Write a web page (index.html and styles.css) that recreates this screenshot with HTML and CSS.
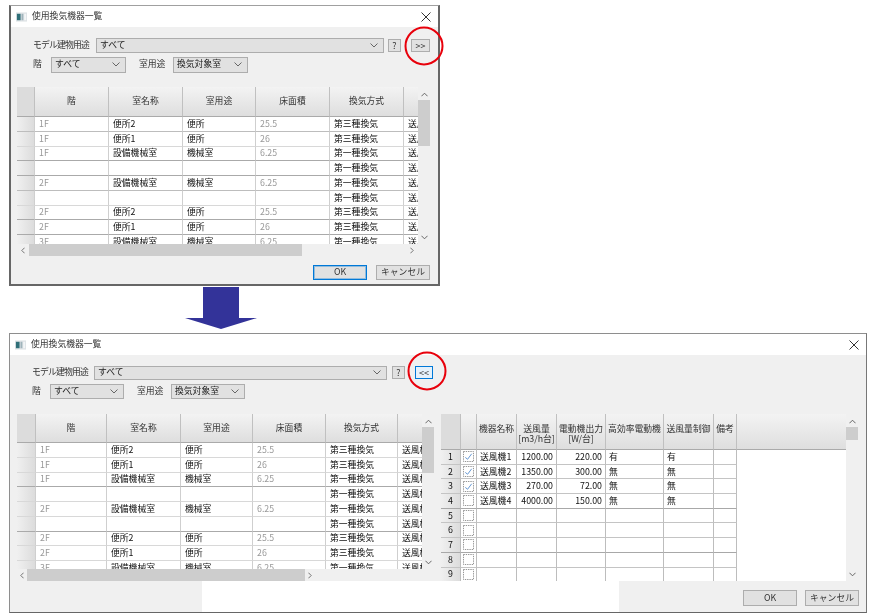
FILE: index.html
```html
<!DOCTYPE html>
<html lang="ja">
<head>
<meta charset="utf-8">
<title>使用換気機器一覧</title>
<link rel="stylesheet" href="styles.css">
</head>
<body>
<section class="win win-small">
  <header class="titlebar">
    <svg class="appicon" viewBox="0 0 12 10"><rect width="12" height="10" fill="#dfe3e6"/><rect x="1" y="1.5" width="4" height="7" fill="#2f6f78"/><rect x="6" y="1.5" width="2" height="7" fill="#9fb4bb"/><rect x="9" y="1.5" width="2" height="7" fill="#f4f6f7"/></svg>
    <span class="title">使用換気機器一覧</span>
    <svg class="close" viewBox="0 0 10 10"><path d="M.5.5l9 9M9.5.5l-9 9" stroke="#333" fill="none"/></svg>
  </header>
  <div class="body">
    <div class="filters">
      <div class="frow frow-a">
        <label class="lbl lbl-model">モデル建物用途</label>
        <div class="combo combo-wide"><span>すべて</span><svg class="chev" viewBox="0 0 8 5"><path d="M.5.5L4 4 7.5.5" stroke="#666" fill="none"/></svg></div>
        <button class="btn btn-q">?</button>
        <button class="btn btn-toggle">&gt;&gt;</button>
      </div>
      <div class="frow frow-b">
        <label class="lbl lbl-floor">階</label>
        <div class="combo combo-s"><span>すべて</span><svg class="chev" viewBox="0 0 8 5"><path d="M.5.5L4 4 7.5.5" stroke="#666" fill="none"/></svg></div>
        <label class="lbl lbl-use">室用途</label>
        <div class="combo combo-s"><span>換気対象室</span><svg class="chev" viewBox="0 0 8 5"><path d="M.5.5L4 4 7.5.5" stroke="#666" fill="none"/></svg></div>
      </div>
    </div>
    <div class="gridbox">
      <div class="viewport">
        <div class="row head"><div class="rh"></div><div>階</div><div>室名称</div><div>室用途</div><div>床面積</div><div>換気方式</div><div></div></div>
        <div class="row"><div class="rh"></div><div class="dim">1F</div><div>便所2</div><div>便所</div><div class="dim">25.5</div><div>第三種換気</div><div>送風機</div></div>
        <div class="row lt"><div class="rh"></div><div class="dim">1F</div><div>便所1</div><div>便所</div><div class="dim">26</div><div>第三種換気</div><div>送風機</div></div>
        <div class="row dk"><div class="rh"></div><div class="dim">1F</div><div>設備機械室</div><div>機械室</div><div class="dim">6.25</div><div>第一種換気</div><div>送風機</div></div>
        <div class="row dk"><div class="rh"></div><div></div><div></div><div></div><div></div><div>第一種換気</div><div>送風機</div></div>
        <div class="row"><div class="rh"></div><div class="dim">2F</div><div>設備機械室</div><div>機械室</div><div class="dim">6.25</div><div>第一種換気</div><div>送風機</div></div>
        <div class="row lt"><div class="rh"></div><div></div><div></div><div></div><div></div><div>第一種換気</div><div>送風機</div></div>
        <div class="row dk"><div class="rh"></div><div class="dim">2F</div><div>便所2</div><div>便所</div><div class="dim">25.5</div><div>第三種換気</div><div>送風機</div></div>
        <div class="row dk"><div class="rh"></div><div class="dim">2F</div><div>便所1</div><div>便所</div><div class="dim">26</div><div>第三種換気</div><div>送風機</div></div>
        <div class="row"><div class="rh"></div><div class="dim">3F</div><div>設備機械室</div><div>機械室</div><div class="dim">6.25</div><div>第一種換気</div><div>送風機</div></div>
      </div>
      <div class="vbar"><svg class="arr" viewBox="0 0 8 5"><path d="M.5 4.5L4 1l3.500 3.500" stroke="#555" fill="none"/></svg><i class="vthumb"></i><svg class="arr arr-end" viewBox="0 0 8 5"><path d="M.5.5L4 4 7.500.5" stroke="#555" fill="none"/></svg></div>
      <div class="hbar"><svg class="arrh" viewBox="0 0 5 8"><path d="M4.500.5L1 4l3.500 3.500" stroke="#555" fill="none"/></svg><i class="hthumb"></i><svg class="arrh arrh-end" viewBox="0 0 5 8"><path d="M.5.5L4 4 .5 7.500" stroke="#555" fill="none"/></svg></div>
    </div>
    <div class="actions">
      <button class="btn btn-act btn-def">OK</button>
      <button class="btn btn-act">キャンセル</button>
    </div>
  </div>
  <svg class="ring" viewBox="0 0 40 40"><circle cx="20" cy="20" r="18.500" stroke="#e8000b" stroke-width="2" fill="none"/></svg>
</section>

<svg class="bigarrow" viewBox="0 0 72 42"><path d="M18 0h36v31h18L36 42 0 31h18z" fill="#333399"/></svg>

<section class="win win-large">
  <header class="titlebar">
    <svg class="appicon" viewBox="0 0 12 10"><rect width="12" height="10" fill="#dfe3e6"/><rect x="1" y="1.5" width="4" height="7" fill="#2f6f78"/><rect x="6" y="1.5" width="2" height="7" fill="#9fb4bb"/><rect x="9" y="1.5" width="2" height="7" fill="#f4f6f7"/></svg>
    <span class="title">使用換気機器一覧</span>
    <svg class="close" viewBox="0 0 10 10"><path d="M.5.5l9 9M9.5.5l-9 9" stroke="#333" fill="none"/></svg>
  </header>
  <div class="body">
    <div class="filters">
      <div class="frow frow-a">
        <label class="lbl lbl-model">モデル建物用途</label>
        <div class="combo combo-wide"><span>すべて</span><svg class="chev" viewBox="0 0 8 5"><path d="M.5.5L4 4 7.500.5" stroke="#666" fill="none"/></svg></div>
        <button class="btn btn-q">?</button>
        <button class="btn btn-toggle btn-focus">&lt;&lt;</button>
      </div>
      <div class="frow frow-b">
        <label class="lbl lbl-floor">階</label>
        <div class="combo combo-s"><span>すべて</span><svg class="chev" viewBox="0 0 8 5"><path d="M.5.5L4 4 7.500.5" stroke="#666" fill="none"/></svg></div>
        <label class="lbl lbl-use">室用途</label>
        <div class="combo combo-s"><span>換気対象室</span><svg class="chev" viewBox="0 0 8 5"><path d="M.5.5L4 4 7.500.5" stroke="#666" fill="none"/></svg></div>
      </div>
    </div>
    <div class="panes">
      <div class="gridbox">
        <div class="viewport">
          <div class="row head"><div class="rh"></div><div>階</div><div>室名称</div><div>室用途</div><div>床面積</div><div>換気方式</div><div></div></div>
          <div class="row lt"><div class="rh"></div><div class="dim">1F</div><div>便所2</div><div>便所</div><div class="dim">25.5</div><div>第三種換気</div><div>送風機</div></div>
          <div class="row lt"><div class="rh"></div><div class="dim">1F</div><div>便所1</div><div>便所</div><div class="dim">26</div><div>第三種換気</div><div>送風機</div></div>
          <div class="row dk"><div class="rh"></div><div class="dim">1F</div><div>設備機械室</div><div>機械室</div><div class="dim">6.25</div><div>第一種換気</div><div>送風機</div></div>
          <div class="row lt"><div class="rh"></div><div></div><div></div><div></div><div></div><div>第一種換気</div><div>送風機</div></div>
          <div class="row lt"><div class="rh"></div><div class="dim">2F</div><div>設備機械室</div><div>機械室</div><div class="dim">6.25</div><div>第一種換気</div><div>送風機</div></div>
          <div class="row dk"><div class="rh"></div><div></div><div></div><div></div><div></div><div>第一種換気</div><div>送風機</div></div>
          <div class="row lt"><div class="rh"></div><div class="dim">2F</div><div>便所2</div><div>便所</div><div class="dim">25.5</div><div>第三種換気</div><div>送風機</div></div>
          <div class="row lt"><div class="rh"></div><div class="dim">2F</div><div>便所1</div><div>便所</div><div class="dim">26</div><div>第三種換気</div><div>送風機</div></div>
          <div class="row"><div class="rh"></div><div class="dim">3F</div><div>設備機械室</div><div>機械室</div><div class="dim">6.25</div><div>第一種換気</div><div>送風機</div></div>
        </div>
        <div class="vbar"><svg class="arr" viewBox="0 0 8 5"><path d="M.5 4.500L4 1l3.500 3.500" stroke="#555" fill="none"/></svg><i class="vthumb"></i><svg class="arr arr-end" viewBox="0 0 8 5"><path d="M.5.5L4 4 7.500.5" stroke="#555" fill="none"/></svg></div>
        <div class="hbar"><svg class="arrh" viewBox="0 0 5 8"><path d="M4.500.5L1 4l3.500 3.500" stroke="#555" fill="none"/></svg><i class="hthumb"></i><svg class="arrh arrh-end" viewBox="0 0 5 8"><path d="M.5.5L4 4 .5 7.500" stroke="#555" fill="none"/></svg></div>
      </div>
      <div class="devbox">
        <div class="devview">
          <div class="drow dhead"><div class="rh"></div><div></div><div>機器名称</div><div>送風量<br>[m3/h台]</div><div>電動機出力<br>[W/台]</div><div>高効率電動機</div><div>送風量制御</div><div>備考</div><div></div></div>
          <div class="drow"><div class="rh num">1</div><div class="chk"><svg viewBox="0 0 12 12"><rect x=".5" y=".5" width="11" height="11" fill="#fff" stroke="#888" stroke-dasharray="1.500 1"/><path d="M2.500 7l2.500 2 4.500-6" stroke="#5a8fd0" fill="none"/></svg></div><div>送風機1</div><div class="r">1200.00</div><div class="r">220.00</div><div>有</div><div>有</div><div></div></div>
          <div class="drow"><div class="rh num">2</div><div class="chk"><svg viewBox="0 0 12 12"><rect x=".5" y=".5" width="11" height="11" fill="#fff" stroke="#888" stroke-dasharray="1.500 1"/><path d="M2.500 7l2.500 2 4.500-6" stroke="#5a8fd0" fill="none"/></svg></div><div>送風機2</div><div class="r">1350.00</div><div class="r">300.00</div><div>無</div><div>無</div><div></div></div>
          <div class="drow"><div class="rh num">3</div><div class="chk"><svg viewBox="0 0 12 12"><rect x=".5" y=".5" width="11" height="11" fill="#fff" stroke="#888" stroke-dasharray="1.500 1"/><path d="M2.500 7l2.500 2 4.500-6" stroke="#5a8fd0" fill="none"/></svg></div><div>送風機3</div><div class="r">270.00</div><div class="r">72.00</div><div>無</div><div>無</div><div></div></div>
          <div class="drow dk"><div class="rh num">4</div><div class="chk"><svg viewBox="0 0 12 12"><rect x=".5" y=".5" width="11" height="11" fill="#fff" stroke="#888" stroke-dasharray="1.500 1"/></svg></div><div>送風機4</div><div class="r">4000.00</div><div class="r">150.00</div><div>無</div><div>無</div><div></div></div>
          <div class="drow"><div class="rh num">5</div><div class="chk"><svg viewBox="0 0 12 12"><rect x=".5" y=".5" width="11" height="11" fill="#fff" stroke="#888" stroke-dasharray="1.500 1"/></svg></div><div></div><div></div><div></div><div></div><div></div><div></div></div>
          <div class="drow"><div class="rh num">6</div><div class="chk"><svg viewBox="0 0 12 12"><rect x=".5" y=".5" width="11" height="11" fill="#fff" stroke="#888" stroke-dasharray="1.500 1"/></svg></div><div></div><div></div><div></div><div></div><div></div><div></div></div>
          <div class="drow dk"><div class="rh num">7</div><div class="chk"><svg viewBox="0 0 12 12"><rect x=".5" y=".5" width="11" height="11" fill="#fff" stroke="#888" stroke-dasharray="1.500 1"/></svg></div><div></div><div></div><div></div><div></div><div></div><div></div></div>
          <div class="drow"><div class="rh num">8</div><div class="chk"><svg viewBox="0 0 12 12"><rect x=".5" y=".5" width="11" height="11" fill="#fff" stroke="#888" stroke-dasharray="1.500 1"/></svg></div><div></div><div></div><div></div><div></div><div></div><div></div></div>
          <div class="drow"><div class="rh num">9</div><div class="chk"><svg viewBox="0 0 12 12"><rect x=".5" y=".5" width="11" height="11" fill="#fff" stroke="#888" stroke-dasharray="1.500 1"/></svg></div><div></div><div></div><div></div><div></div><div></div><div></div></div>
        </div>
        <div class="vbar"><svg class="arr" viewBox="0 0 8 5"><path d="M.5 4.500L4 1l3.500 3.500" stroke="#555" fill="none"/></svg><i class="vthumb"></i><svg class="arr arr-end" viewBox="0 0 8 5"><path d="M.5.5L4 4 7.500.5" stroke="#555" fill="none"/></svg></div>
      </div>
    </div>
    <div class="foot">
      <div class="foot-gap"></div>
      <div class="actions">
        <button class="btn btn-act">OK</button>
        <button class="btn btn-act">キャンセル</button>
      </div>
    </div>
  </div>
  <svg class="ring" viewBox="0 0 40 40"><circle cx="20" cy="20" r="18.500" stroke="#e8000b" stroke-width="2" fill="none"/></svg>
</section>
</body>
</html>
```

FILE: styles.css
```css
* { box-sizing: border-box; }
html, body { margin: 0; height: 100%; }
body {
  background: #fff;
  padding: 5px 0 0 9px;
  font: 9px/1 "Noto Sans CJK JP", "Noto Sans", sans-serif;
  color: #111;
  overflow: hidden;
}

/* windows */
.win {
  position: relative;
  display: flex;
  flex-direction: column;
  background: #f0f0f0;
  border-style: solid;
  border-color: #666;
  border-width: 1px 2px 2px 2px;
  filter: blur(.3px);
}
.win-small { width: 431px; height: 281px; border-color: #a0a0a0 #666 #666 #666; }
.win-large { width: 858px; height: 280px; margin-top: 4px; border: 1px solid #8e8e8e; border-bottom-color: #666; border-right-color: #777; }

.titlebar {
  display: flex;
  align-items: center;
  flex: none;
  height: 21px;
  padding: 0 7px 0 5px;
  background: #fff;
}
.appicon { width: 11px; height: 10px; flex: none; }
.title { margin-left: 5px; font-size: 8.800px; color: #333; }
.close { width: 10px; height: 10px; margin-left: auto; }

.body { flex: 1; display: flex; flex-direction: column; min-height: 0; }

/* filter rows */
.filters { display: flex; flex-direction: column; padding: 10px 0 0 22px; }
.frow { display: flex; align-items: center; }
.frow-a { height: 17px; }
.frow-b { height: 17px; margin-top: 2px; }
.lbl { font-size: 8.800px; color: #333; }
.lbl-model { width: 63px; letter-spacing: -.8px; }
.lbl-floor { width: 18px; }
.lbl-use { width: 34px; margin-left: 13px; }
.combo {
  display: flex;
  align-items: center;
  background: #e1e1e1;
  border: 1px solid #adadad;
  padding: 0 5px 0 3px;
  font-size: 8.800px;
  color: #222;
}
.combo .chev { width: 8px; height: 5px; margin-left: auto; }
.combo-wide { width: 288px; height: 15px; }
.combo-s { width: 75px; height: 16px; }

.btn {
  display: flex;
  align-items: center;
  justify-content: center;
  padding: 0;
  background: #e1e1e1;
  border: 1px solid #adadad;
  font: inherit;
  color: #333;
}
.btn-q { width: 13px; height: 13px; margin-left: 4px; }
.btn-toggle { width: 19px; height: 13px; margin-left: 10px; }
.btn-focus { border-color: #0078d7; background: #e5f1fb; }

/* grid */
.gridbox {
  display: grid;
  grid-template-columns: 1fr 12px;
  grid-template-rows: 1fr 12px;
  width: 413px;
  height: 169px;
  margin: 14px 0 0 6px;
  flex: none;
}
.viewport { overflow: hidden; background: #fff; }
.row {
  display: grid;
  grid-template-columns: 18px 74px 74px 73px 74px 74px 1fr;
  height: 14.750px;
  white-space: nowrap;
}
.row > div {
  display: flex;
  align-items: center;
  padding: 1px 0 0 4px;
  border-right: 1px solid #cfcfcf;
  border-bottom: 1px solid #bdbdbd;
  font-size: 8.800px;
  overflow: hidden;
}
.row > div:last-child { border-right: 0; }
.row.lt > div { border-bottom-color: #d8d8d8; }
.row.dk > div { border-bottom-color: #aaa; }
.dim { color: #999; }
.row > .rh, .drow > .rh { background: linear-gradient(90deg, #f0f0f0, #dcdcdc); padding: 0; }
.row.head { height: 30px; }
.row.head > div {
  justify-content: center;
  padding: 0;
  background: linear-gradient(#f3f3f3, #dedede);
  border-color: #c0c0c0;
  border-bottom-color: #aaa;
  color: #333;
}
.row.head > .rh { background: #dcdcdc; }

.vbar {
  grid-row: 1;
  grid-column: 2;
  display: flex;
  flex-direction: column;
  align-items: center;
  background: #f0f0f0;
}
.hbar {
  grid-row: 2;
  grid-column: 1 / 3;
  display: flex;
  align-items: center;
  background: #f0f0f0;
}
.arr { width: 7px; height: 5px; margin-top: 5px; flex: none; }
.arr-end { margin-top: auto; margin-bottom: 4px; }
.vthumb { display: block; width: 100%; height: 46px; margin-top: 3px; background: #cdcdcd; }
.arrh { width: 4px; height: 7px; margin-left: 4px; flex: none; }
.arrh-end { margin-left: 108px; }
.hthumb { display: block; width: 273px; height: 100%; margin-left: 4px; background: #cdcdcd; }

.actions { display: flex; gap: 9px; justify-content: flex-end; padding: 9px 8px 0 0; }
.btn-act { width: 54px; height: 15px; font-size: 8.800px; }
.btn-def { border: 1px solid #0078d7; box-shadow: inset 0 0 0 1px rgba(0, 120, 215, .35); }

/* large window */
.win-large .filters { padding-top: 10px; padding-left: 22px; }
.win-large .frow-a { height: 15px; }
.win-large .lbl-model { width: 62px; }
.win-large .combo-wide { width: 293px; height: 14px; }
.win-large .btn-q { margin-left: 5px; }
.win-large .btn-toggle { margin-left: 10px; width: 18px; }
.win-large .frow-b { height: 16px; margin-top: 3px; }
.win-large .combo-s { height: 15px; width: 74px; }
.panes { display: flex; align-items: flex-start; gap: 7px; margin: 15px 0 0 7px; flex: none; }
.win-large .gridbox { width: 417px; height: 167px; margin: 0; }
.win-large .row { grid-template-columns: 19px 71px 74px 72px 73px 72px 1fr; }
.win-large .row.head { height: 29px; }
.win-large .arrh-end { margin-left: 106px; }
.win-large .hthumb { width: 278px; margin-left: 3px; }
.win-large .arrh { margin-left: 3px; }

.devbox { display: grid; grid-template-columns: 405px 12px; height: 167px; }
.devview { background: #fff; overflow: hidden; }
.drow {
  display: grid;
  grid-template-columns: 20px 16px 40px 40px 49px 58px 50px 23px 1fr;
  height: 14.700px;
}
.drow > div {
  display: flex;
  align-items: center;
  padding: 1px 0 0 3px;
  border-right: 1px solid #bdbdbd;
  border-bottom: 1px solid #c4c4c4;
  font-size: 8.800px;
  white-space: nowrap;
  overflow: hidden;
}
.drow > div:nth-child(9) { border: 0; }
.drow.dk > div { border-bottom-color: #a8a8a8; }
.drow .r { justify-content: flex-end; padding: 1px 3px 0 0; }
.drow .num { justify-content: center; padding: 1px 0 0; }
.drow .chk { justify-content: center; padding: 0; }
.chk svg { width: 11px; height: 11px; }
.drow.dhead { height: 36px; }
.drow.dhead > div {
  background: linear-gradient(#f3f3f3, #dedede);
  border-color: #c0c0c0;
  border-bottom-color: #aaa;
  align-items: flex-start;
  justify-content: center;
  text-align: center;
  padding: 10px 0 0;
  line-height: 10px;
  color: #333;
}
.drow.dhead > div:nth-child(9) { border-bottom: 1px solid #aaa; }
.drow.dhead > .rh { background: #dcdcdc; }
.devbox .vthumb { height: 13px; }

.foot { flex: 1; display: flex; }
.foot-gap { width: 417px; margin-left: 192px; background: #fff; flex: none; }
.foot .actions { flex: 1; gap: 8px; padding: 9px 7px 0 0; }
.foot .btn-act { height: 16px; }

/* callout ring */
.ring { position: absolute; width: 40px; height: 40px; pointer-events: none; overflow: visible; }
.win-small .ring { left: 393px; top: 20px; }
.win-large .ring { left: 397px; top: 17px; }

.bigarrow { display: block; width: 72px; height: 42px; margin: 1px 0 0 176px; }
```
